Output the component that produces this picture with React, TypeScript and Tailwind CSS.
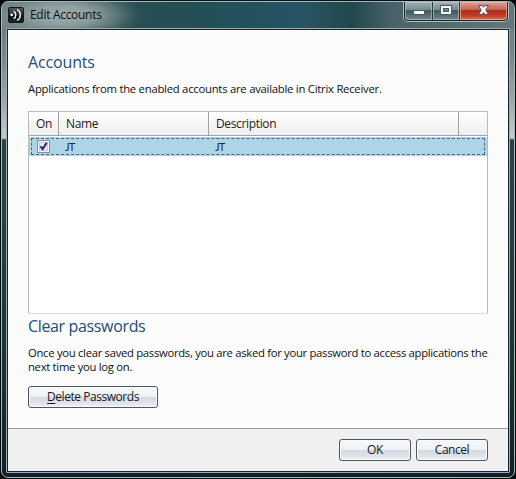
import React from "react";

function ReceiverIcon() {
  return (
    <svg width="16" height="16" viewBox="0 0 16 16" className="block shrink-0">
      <defs>
        <linearGradient id="ico" x1="0" y1="0" x2="0" y2="1">
          <stop offset="0" stopColor="#555b5d" />
          <stop offset="0.5" stopColor="#25292b" />
          <stop offset="0.55" stopColor="#0c0e0f" />
          <stop offset="1" stopColor="#202426" />
        </linearGradient>
      </defs>
      <rect x="0.5" y="0.5" width="15" height="15" rx="1.5" fill="url(#ico)" stroke="#16191a" />
      <circle cx="3.7" cy="7.9" r="1.3" fill="#fff" />
      <path d="M5.6 4.2C8.5 5.4 8.5 10.4 5.6 11.6" fill="none" stroke="#fff" strokeWidth="1.4" />
      <path d="M9.1 2.4C13.4 4.8 13.4 11 9.1 13.4" fill="none" stroke="#f4f4f4" strokeWidth="1.4" />
    </svg>
  );
}

function CaptionButtons() {
  return (
    <svg width="106" height="20" viewBox="0 0 106 20" className="block shrink-0">
      <defs>
        <linearGradient id="glass" x1="0" y1="0" x2="0" y2="1">
          <stop offset="0" stopColor="#a0afb2" />
          <stop offset="0.42" stopColor="#758c91" />
          <stop offset="0.48" stopColor="#3d575c" />
          <stop offset="1" stopColor="#73888c" />
        </linearGradient>
        <linearGradient id="close" x1="0" y1="0" x2="0" y2="1">
          <stop offset="0" stopColor="#dca298" />
          <stop offset="0.42" stopColor="#c56556" />
          <stop offset="0.48" stopColor="#ad2b16" />
          <stop offset="0.8" stopColor="#c64428" />
          <stop offset="1" stopColor="#df8060" />
        </linearGradient>
      </defs>
      <path d="M0.5 0V15Q0.5 19.5 5 19.5H101Q105.5 19.5 105.5 15V0" fill="#26393e" stroke="#b0bdbe" />
      <path d="M1.5 0V15Q1.5 18.5 5 18.5H101Q104.5 18.5 104.5 15V0Z" fill="none" stroke="#1b292d" />
      <path d="M2 0H29V18H5Q2 18 2 15Z" fill="url(#glass)" />
      <path d="M30 0H56V18H30Z" fill="url(#glass)" />
      <path d="M57 0H104V15Q104 18 101 18H57Z" fill="url(#close)" />
      <path d="M2.5 0.5H28.5V17.5H5Q2.5 17.5 2.5 15ZM30.5 0.5H55.5V17.5H30.5Z" fill="none" stroke="#c5d0d1" strokeOpacity="0.55" />
      <path d="M57.5 0.5H103.5V15Q103.5 17.5 101 17.5H57.5Z" fill="none" stroke="#f2b8ac" strokeOpacity="0.65" />
      <rect x="10.5" y="8.5" width="11" height="4" rx="0.5" fill="#f7f8f8" stroke="#4c5964" />
      <path d="M37.5 3.5H48.5V12.5H37.5Z" fill="#f7f8f8" stroke="#4c5964" />
      <rect x="40.5" y="6.5" width="5" height="3" fill="#718489" stroke="#4c5964" />
      <path d="M75.5 3.5H79.2L80.5 5.3L81.8 3.5H85.5L82.8 8L85.5 12.5H81.8L80.5 10.6L79.2 12.5H75.5L78.2 8Z" fill="#f7f8f8" stroke="#5b4d56" />
    </svg>
  );
}

function Button({ className, children }: { className: string; children: React.ReactNode }) {
  return (
    <button className={"flex h-[22px] items-center justify-center rounded-[3px] border border-[#505660] bg-[linear-gradient(to_bottom,#f4f7f9_0%,#f0f4f7_47%,#d4d9e2_50%,#dce0e8_75%,#eef1f4_100%)] text-[12px] leading-[16px] tracking-[-0.45px] text-[#17191c] shadow-[inset_0_0_0_1px_#fbfcfd] " + className}>
      <span>{children}</span>
    </button>
  );
}

export default function App() {
  return (
    <div className="h-[479px] w-[516px] overflow-hidden bg-[linear-gradient(to_right,#060b0e,#09131a_50%,#03080c)] pl-px pt-px font-['Open_Sans','Noto_Sans',sans-serif] text-[#111]">
      <div className="flex h-[477px] w-[514px] flex-col rounded-[7px] border border-[#a6b7b8] bg-[linear-gradient(to_bottom,#66797d_0px,#71868b_50px,#9ba9ac_100px,#c7cdce_136px,#24464a_138px,#1e3e42_270px,#153230_390px,#101f2b_475px)]">
        <header className="flex h-[26px] shrink-0 items-start justify-between rounded-t-[6px] bg-[radial-gradient(ellipse_78px_24px_at_62px_13px,#a0adae_0%,#96a5a6d9_40%,#87999b80_65%,#788d902e_85%,#6c828500_100%),linear-gradient(to_right,#738487_0px,#5c7376_65px,#294f53_135px,#244f55_190px,#23525f_255px,#285465_300px,#21484c_350px,#496269_390px,#64777c_510px)] pl-[6px] pr-[5px]">
          <div className="flex h-[26px] items-center gap-[6px]">
            <ReceiverIcon />
            <span className="text-[12px] leading-[16px] tracking-[-0.3px] text-[#071014]">Edit Accounts</span>
          </div>
          <CaptionButtons />
        </header>
        <div className="mx-[4px] flex h-[445px] flex-col rounded-[1px] border border-[#9bacad]">
          <div className="flex h-[443px] flex-col border border-[#172529] bg-[#fcfcfc]">
            <main className="h-[398px] px-[20px] pt-[20px]">
              <h1 className="h-[24px] whitespace-nowrap text-[16px] leading-[24px] tracking-[-0.15px] text-[#254b7d]">Accounts</h1>
              <p className="mt-[7px] h-[16px] whitespace-nowrap text-[11.3px] leading-[16px] tracking-[-0.25px]">Applications from the enabled accounts are available in Citrix Receiver.</p>
              <div className="mt-[14px] h-[203px] w-[460px] border border-[#b9b9b9] border-b-[#dedede] bg-white">
                <div className="flex h-[24px] border-b border-[#a5a5a5] bg-[linear-gradient(to_bottom,#fff,#eee)] text-[12px] leading-[24px] tracking-[-0.35px] text-[#202020]">
                  <div className="w-[30px] border-r border-[#a0a0a0] pl-[7px]">On</div>
                  <div className="w-[150px] border-r border-[#a0a0a0] pl-[7px]">Name</div>
                  <div className="w-[250px] border-r border-[#a0a0a0] pl-[7px]">Description</div>
                </div>
                <div className="mt-px h-[19px] bg-[#add5e7] pl-[2px] pr-[2px] pt-px">
                  <div className="flex h-[17px] items-center border border-dashed border-[#4b6a82] text-[11px] leading-[15px] text-[#252a30]">
                    <div className="flex w-[29px] items-center pl-[5px]">
                      <svg width="13" height="13" viewBox="0 0 13 13">
                        <rect x="0.5" y="0.5" width="12" height="12" fill="#f4f4f4" stroke="#8a9299" />
                        <rect x="2.5" y="2.5" width="8" height="8" fill="#e5e9ef" stroke="#c2c9d0" />
                        <path d="M3.5 6.3L5.7 9L9.7 2.8" fill="none" stroke="#29246e" strokeWidth="2" />
                      </svg>
                    </div>
                    <div className="w-[150px] pl-[4px] font-['Lato',sans-serif] tracking-[-0.8px]">JT</div>
                    <div className="pl-[4px] font-['Lato',sans-serif] tracking-[-0.8px]">JT</div>
                  </div>
                </div>
              </div>
              <h2 className="h-[24px] whitespace-nowrap text-[16px] leading-[24px] tracking-[-0.35px] text-[#254b7d]">Clear passwords</h2>
              <p className="mt-[8px] whitespace-nowrap text-[11.3px] leading-[14px] tracking-[-0.305px]">
                Once you clear saved passwords, you are asked for your password to access applications the
                <br />
                next time you log on.
              </p>
              <Button className="mt-[12px] w-[130px]"><span className="underline underline-offset-2">D</span>elete Passwords</Button>
            </main>
            <footer className="flex flex-1 items-start justify-end gap-[5px] border-t border-[#989ca0] bg-[#f0f0f0] pr-[20px] pt-[10px]">
              <Button className="w-[72px]">OK</Button>
              <Button className="w-[72px]">Cancel</Button>
            </footer>
          </div>
        </div>
      </div>
    </div>
  );
}
